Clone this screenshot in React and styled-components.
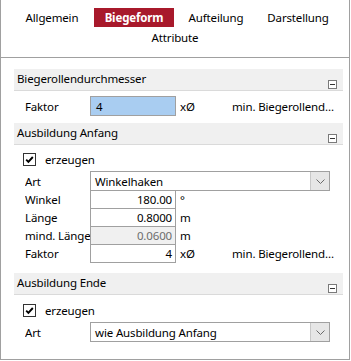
import React from "react";
import styled, { createGlobalStyle } from "styled-components";

const GlobalStyle = createGlobalStyle`
  body {
    margin: 0;
    background: #ffffff;
    font-family: "Noto Sans", "Open Sans", sans-serif;
    font-size: 11.5px;
    letter-spacing: -0.15px;
    color: #000;
  }
`;

const tabs = ["Allgemein", "Biegeform", "Aufteilung", "Darstellung", "Attribute"];

const App = () => {
  return (
    <Frame>
      <GlobalStyle />
      <TabBar>
        {tabs.map((t) => (
          <Tab key={t} active={t === "Biegeform"}>
            {t}
          </Tab>
        ))}
      </TabBar>
      <Content>
        <Section>
          <SectionHeader>
            <span>Biegerollendurchmesser</span>
            <CollapseBox />
          </SectionHeader>
          <SectionBody top={5} bottom={7}>
            <Row tall>
              <Label>Faktor</Label>
              <Field highlighted align="left">4</Field>
              <Unit>xØ</Unit>
              <Note>min. Biegerollendurchmesser</Note>
            </Row>
          </SectionBody>
        </Section>

        <Section>
          <SectionHeader>
            <span>Ausbildung Anfang</span>
            <CollapseBox />
          </SectionHeader>
          <SectionBody top={8} bottom={10}>
            <CheckRow>
              <CheckBox />
              <span>erzeugen</span>
            </CheckRow>
            <Row tall>
              <Label>Art</Label>
              <Select>
                <span>Winkelhaken</span>
                <SelectButton>
                  <Chevron />
                </SelectButton>
              </Select>
            </Row>
            <Row stacked>
              <Label>Winkel</Label>
              <Field>180.00</Field>
              <Unit>°</Unit>
            </Row>
            <Row stacked>
              <Label>Länge</Label>
              <Field>0.8000</Field>
              <Unit>m</Unit>
            </Row>
            <Row stacked>
              <Label>mind. Länge</Label>
              <Field readOnly>0.0600</Field>
              <Unit>m</Unit>
            </Row>
            <Row stacked>
              <Label>Faktor</Label>
              <Field>4</Field>
              <Unit>xØ</Unit>
              <Note>min. Biegerollendurchmesser</Note>
            </Row>
          </SectionBody>
        </Section>

        <Section>
          <SectionHeader>
            <span>Ausbildung Ende</span>
            <CollapseBox />
          </SectionHeader>
          <SectionBody top={9} bottom={0}>
            <CheckRow>
              <CheckBox />
              <span>erzeugen</span>
            </CheckRow>
            <Row tall>
              <Label>Art</Label>
              <Select>
                <span>wie Ausbildung Anfang</span>
                <SelectButton>
                  <Chevron />
                </SelectButton>
              </Select>
            </Row>
          </SectionBody>
        </Section>
      </Content>
    </Frame>
  );
};

const Chevron = () => (
  <svg width="9" height="5" viewBox="0 0 9 5">
    <path d="M0.5 0.5 L4.5 4.5 L8.5 0.5" fill="none" stroke="#6a6a6a" strokeWidth="1" />
  </svg>
);

const CheckBox = () => (
  <Box>
    <svg width="9" height="9" viewBox="0 0 9 9">
      <path d="M1.2 4.6 L3.4 6.8 L7.8 2" fill="none" stroke="#000" strokeWidth="1.9" />
    </svg>
  </Box>
);

const Frame = styled.div`
  width: 350px;
  height: 360px;
  box-sizing: border-box;
  border: 1px solid #a0a0a0;
  border-top: none;
  background: #fff;
  overflow: hidden;
`;

const TabBar = styled.div`
  display: flex;
  flex-wrap: wrap;
  justify-content: center;
  row-gap: 1px;
  padding: 8px 9px 10px;
  height: 58px;
  box-sizing: border-box;
  border-bottom: 1px solid #a0a0a0;
`;

const Tab = styled.div`
  width: 80px;
  margin: 0 1px;
  height: 19px;
  line-height: 19px;
  text-align: center;
  white-space: nowrap;
  font-weight: ${(p) => (p.active ? 700 : 400)};
  color: ${(p) => (p.active ? "#fff" : "#000")};
  background: ${(p) => (p.active ? "#a8192b" : "transparent")};
`;

const Content = styled.div`
  padding: 11px 6px 0 13px;
`;

const Section = styled.div`
  display: flex;
  flex-direction: column;
`;

const SectionHeader = styled.div`
  display: flex;
  justify-content: space-between;
  height: 22px;
  box-sizing: border-box;
  padding-left: 3px;
  background: #f0f0f0;
  border-bottom: 1px solid #dadada;
  span {
    line-height: 20px;
  }
`;

const CollapseBox = styled.div`
  align-self: flex-end;
  width: 9px;
  height: 9px;
  box-sizing: border-box;
  margin: 0 6px 1px 0;
  border: 1px solid #7a7a7a;
  background: #fff;
  position: relative;
  &::after {
    content: "";
    position: absolute;
    left: 1px;
    right: 1px;
    top: 3px;
    height: 1px;
    background: #333;
  }
`;

const SectionBody = styled.div`
  padding: ${(p) => p.top}px 3px ${(p) => p.bottom}px 11px;
  display: flex;
  flex-direction: column;
`;

const Row = styled.div`
  display: flex;
  align-items: center;
  height: ${(p) => (p.tall ? 20 : 19)}px;
  margin-top: ${(p) => (p.stacked ? -1 : 0)}px;
`;

const Label = styled.div`
  width: 65px;
  flex: none;
  overflow: hidden;
  white-space: nowrap;
`;

const Field = styled.div`
  width: 86px;
  height: 100%;
  flex: none;
  box-sizing: border-box;
  border: 1px solid #a0a0a0;
  padding: 0 3px 0 5px;
  display: flex;
  align-items: center;
  justify-content: ${(p) => (p.align === "left" ? "flex-start" : "flex-end")};
  background: ${(p) => (p.highlighted ? "#a9cdf1" : p.readOnly ? "#f0f0f0" : "#fff")};
  color: ${(p) => (p.readOnly ? "#6d6d6d" : "#000")};
`;

const Unit = styled.div`
  width: 56px;
  flex: none;
  padding-left: 4px;
  box-sizing: border-box;
`;

const Note = styled.div`
  flex: 1;
  min-width: 0;
  overflow: hidden;
  white-space: nowrap;
  text-overflow: ellipsis;
`;

const CheckRow = styled.div`
  display: flex;
  align-items: center;
  gap: 9px;
  height: 13px;
  margin: 0 0 5px -2px;
`;

const Box = styled.div`
  width: 13px;
  height: 13px;
  box-sizing: border-box;
  border: 1px solid #333;
  background: #fff;
  display: flex;
  align-items: center;
  justify-content: center;
`;

const Select = styled.div`
  width: 240px;
  height: 100%;
  box-sizing: border-box;
  border: 1px solid #a0a0a0;
  display: flex;
  align-items: center;
  justify-content: space-between;
  padding-left: 4px;
`;

const SelectButton = styled.div`
  width: 18px;
  height: 100%;
  background: #e6e6e6;
  border-left: 1px solid #c8c8c8;
  display: flex;
  align-items: center;
  justify-content: center;
`;

export default App;
